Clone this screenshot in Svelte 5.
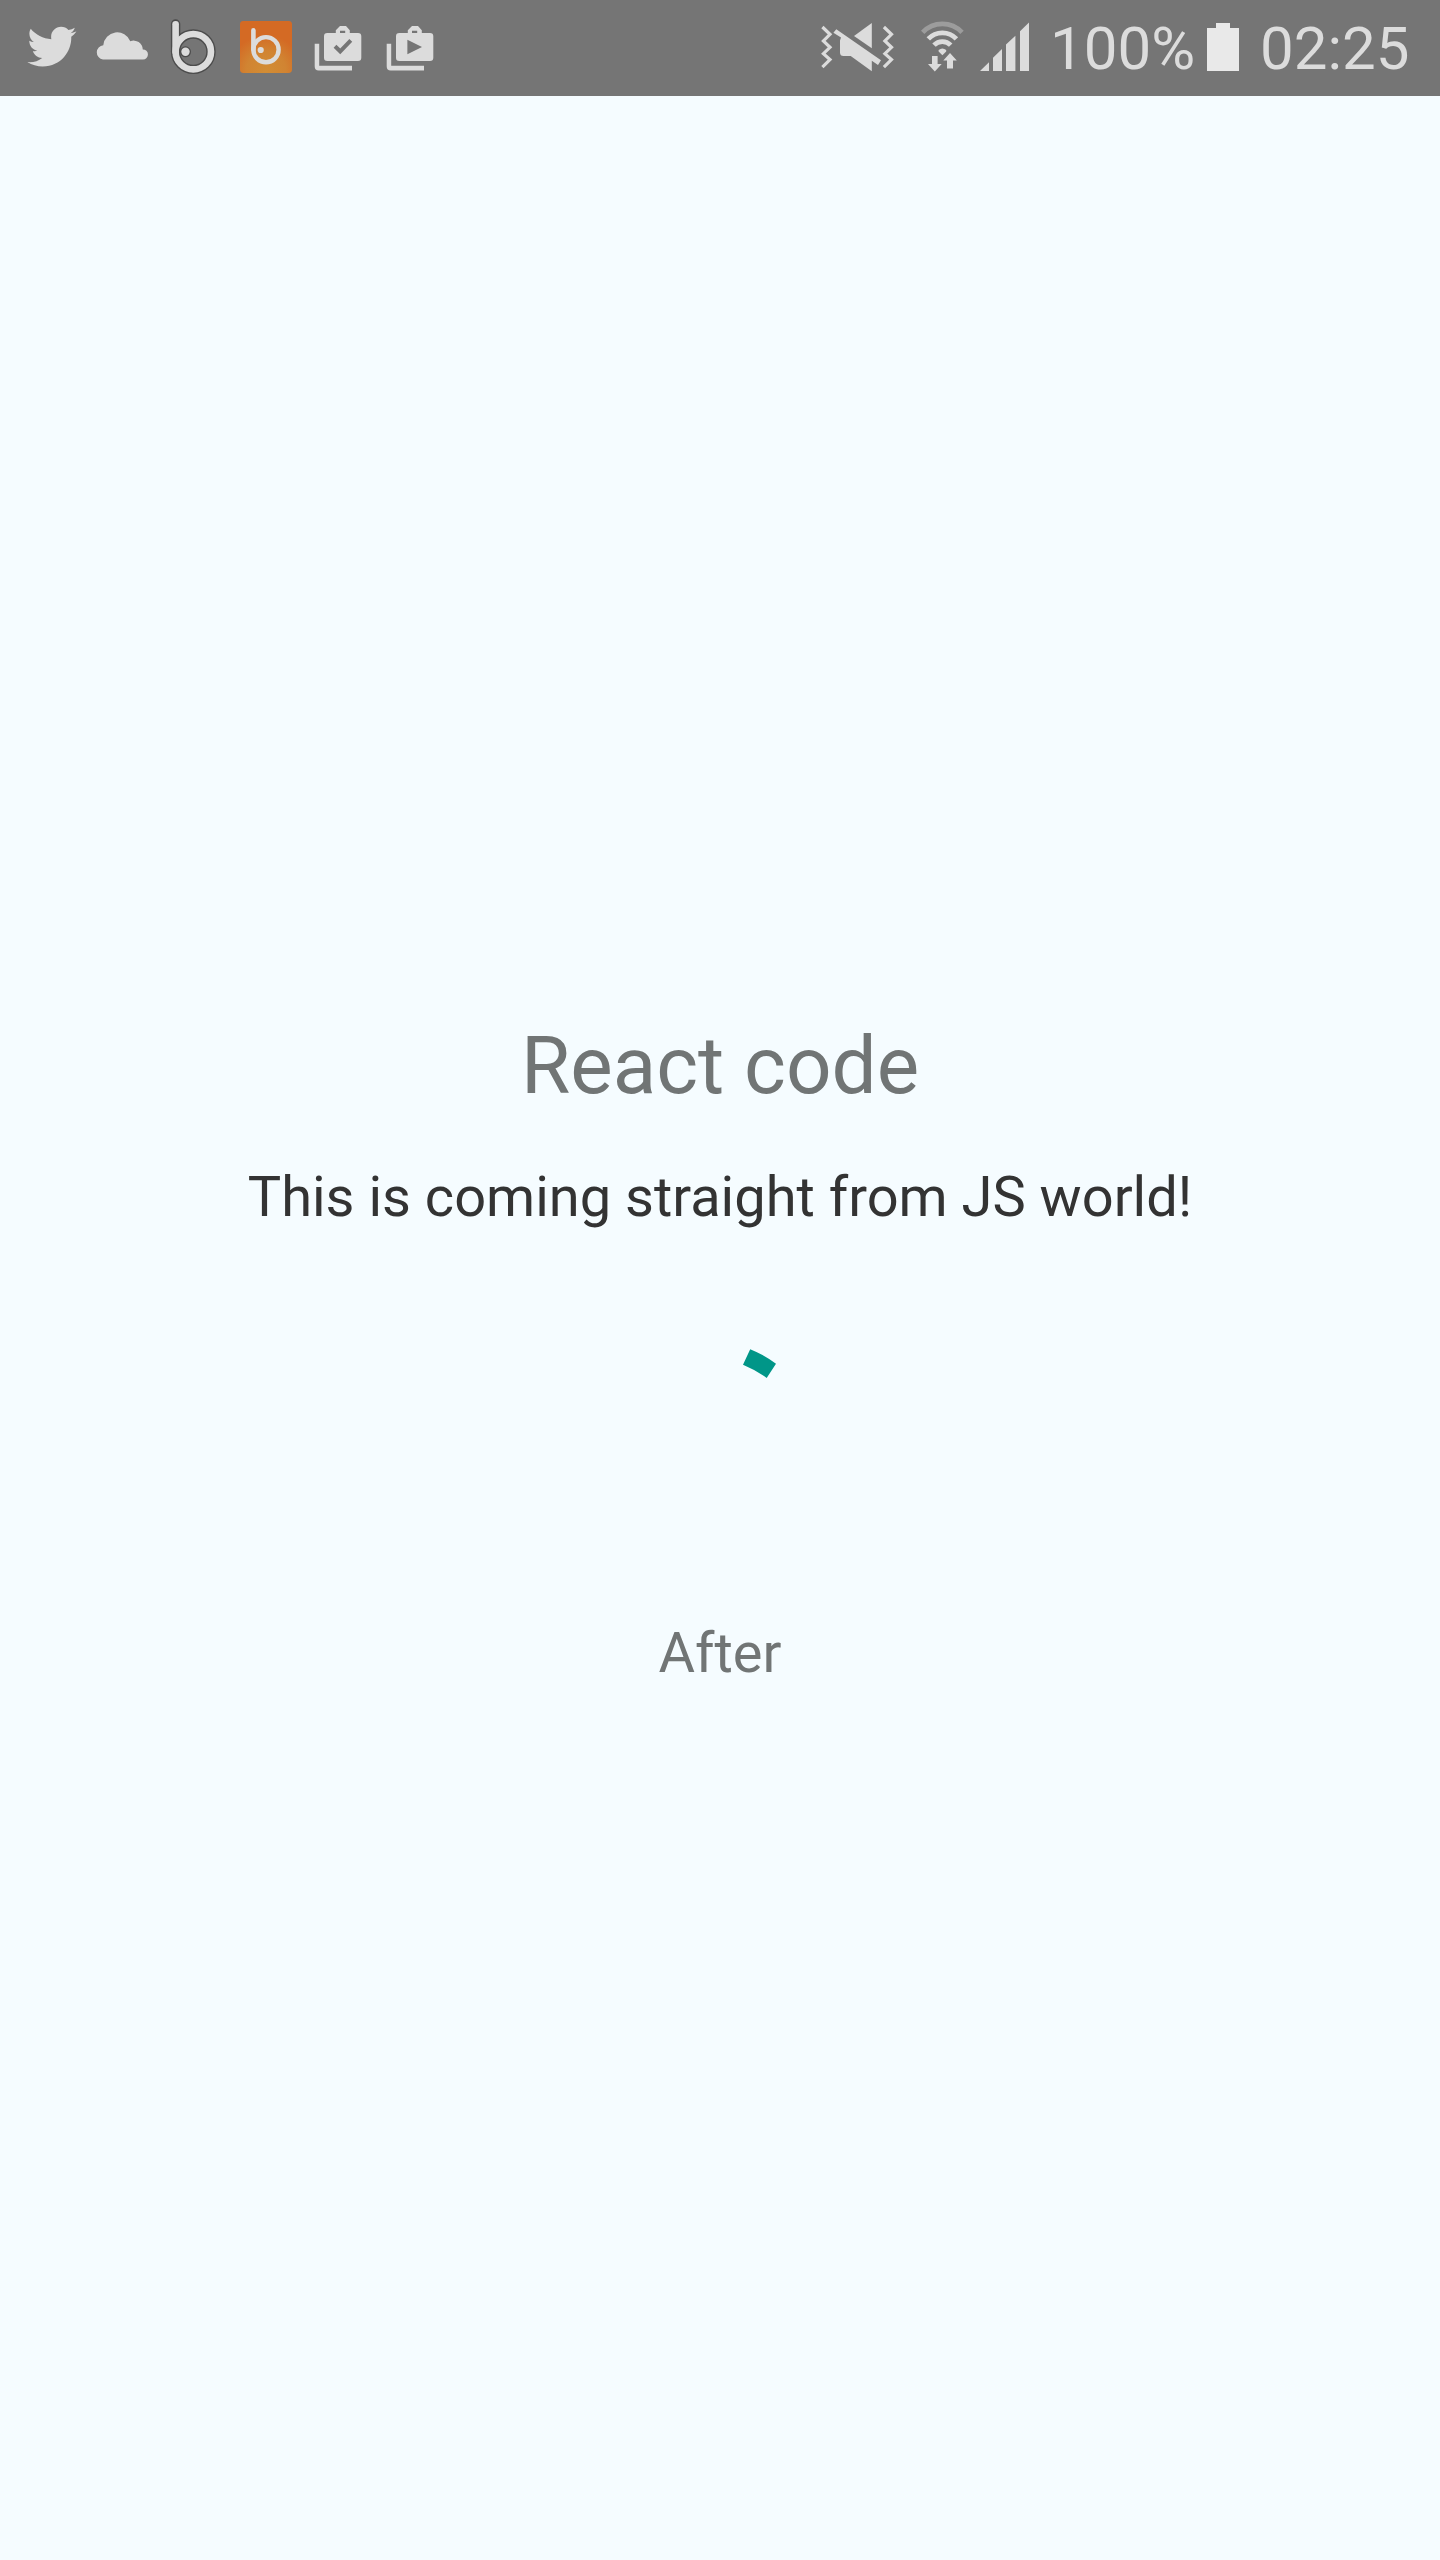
<script>
  const bags = [
    { kind: 'check', x: 0 },
    { kind: 'play', x: 72 }
  ];
</script>

<div class="screen">
  <header class="status">
    <div class="group">
      <svg class="icon" width="86" height="96" viewBox="0 0 86 96">
        <path transform="translate(27.4 22.3) scale(2.035)" d="M23.954 4.569c-.885.389-1.83.654-2.825.775 1.014-.611 1.794-1.574 2.163-2.723-.951.555-2.005.959-3.127 1.184-.896-.959-2.173-1.559-3.591-1.559-2.717 0-4.92 2.203-4.92 4.917 0 .39.045.765.127 1.124C7.691 8.094 4.066 6.13 1.64 3.161c-.427.722-.666 1.561-.666 2.475 0 1.71.87 3.213 2.188 4.096-.807-.026-1.566-.248-2.228-.616v.061c0 2.385 1.693 4.374 3.946 4.827-.413.111-.849.171-1.296.171-.314 0-.615-.03-.916-.086.631 1.953 2.445 3.377 4.604 3.417-1.68 1.319-3.809 2.105-6.102 2.105-.39 0-.779-.023-1.17-.067 2.189 1.394 4.768 2.209 7.557 2.209 9.054 0 13.999-7.496 13.999-13.986 0-.209 0-.42-.015-.63.961-.689 1.8-1.56 2.46-2.548z" />
      </svg>
      <svg class="icon" width="74" height="96" viewBox="86 0 74 96">
        <path d="M103 59.5a7.2 7.2 0 0 1 0.3-14.3A14 14 0 0 1 130.3 41.3A9 9 0 0 1 142.8 49.4A5 5 0 0 1 143 59.5z" />
      </svg>
      <svg class="icon" width="70" height="96" viewBox="160 0 70 96">
        <g class="shade">
          <path d="M175.6 24V51.7" stroke-width="9.4" />
          <circle cx="193.3" cy="51.7" r="17.7" stroke-width="9.4" />
          <circle cx="185.5" cy="51.8" r="3" stroke-width="5" />
        </g>
        <g class="line">
          <path d="M175.6 24.3V51.7" stroke-width="6.6" />
          <circle cx="193.3" cy="51.7" r="17.7" stroke-width="6.6" />
        </g>
        <circle cx="185.5" cy="51.8" r="4.2" />
      </svg>
      <svg class="icon" width="74" height="96" viewBox="230 0 74 96">
        <defs>
          <radialGradient id="glow" gradientUnits="userSpaceOnUse" cx="266" cy="71" r="36">
            <stop offset="0" stop-color="#d28d35" />
            <stop offset="0.55" stop-color="#d18432" />
            <stop offset="1" stop-color="#d46a24" />
          </radialGradient>
        </defs>
        <rect x="240" y="21" width="52" height="52" rx="3.4" fill="url(#glow)" />
        <g class="line">
          <path d="M253.4 30.4V49.7" stroke-width="4.6" />
          <circle cx="266" cy="49.7" r="12.6" stroke-width="4.4" />
        </g>
        <circle cx="260.7" cy="50" r="3.1" />
      </svg>
      {#each bags as bag}
        <svg class="icon" width="72" height="96" viewBox="304 0 72 96">
          <path fill-rule="evenodd" d="M327.3 33H335.8V30.3L340 26H346L349.8 30.3V33H358A3.3 3.3 0 0 1 361.3 36.3V57.7A3.3 3.3 0 0 1 358 61H327.3A3.3 3.3 0 0 1 324 57.7V36.3A3.3 3.3 0 0 1 327.3 33zM340 30.8V33H345.2V30.8z" />
          <path d="M314.7 43.8H319.2V65.7H352V70.4H318.7A4 4 0 0 1 314.7 66.4z" />
          {#if bag.kind === 'check'}
            <path class="cut" d="M335 46.3L340.2 51.3L350.8 40.3" />
          {:else}
            <path class="hole" d="M335.4 39.7V54.2L350 47z" />
          {/if}
        </svg>
      {/each}
    </div>

    <div class="group">
      <svg class="icon" width="100" height="96" viewBox="810 0 100 96">
        <path class="zig" d="M822.4 27L830 34.3L823.4 41L830 47.3L823.4 53.6L830 59.6L822.4 67.2" />
        <path class="zig" d="M883.9 27L891.5 34.3L884.9 41L891.5 47.3L884.9 53.6L891.5 59.6L883.9 67.2" />
        <path d="M854 36L871.8 23V48.3z" />
        <path d="M836.3 29.2L881 60.3L878 65L871.8 60.8V71.2L850.7 56H843.5Q840 56 840 52.5V40.5L841 37.6L833.4 32.8z" />
      </svg>
      <svg class="icon" width="62" height="96" viewBox="910 0 62 96">
        <path class="arc dim" d="M922.7 32.3A27 27 0 0 1 962 32.3" />
        <path class="arc" d="M928.3 38.9A19.3 19.3 0 0 1 956.4 38.9" />
        <path class="arc" d="M934 45.2A11.6 11.6 0 0 1 950.7 45.2" />
        <path d="M938.6 50Q942.4 46.8 946.2 50V51.5L942.4 55.3L938.6 51.5z" />
        <path d="M932 56H937.6V64H941.7L934.8 71.6L928 64H932z" />
        <path d="M947 68.4H953V60.5H956.8L950 53L943.3 60.5H947z" />
      </svg>
      <svg class="icon" width="78" height="96" viewBox="972 0 78 96">
        <path d="M980 71L989 62.3V71zM993 71V57.7L1002 49V71zM1006 71V44.6L1015.4 35.8V71zM1020 71V31.3L1029 22.5V71z" />
      </svg>
      <span class="percent">100%</span>
      <svg class="icon battery" width="54" height="96" viewBox="1196 0 54 96">
        <path d="M1207 28H1216V23H1230V28H1239V71H1207z" />
      </svg>
      <span class="clock">02:25</span>
    </div>
  </header>

  <main>
    <h1>React code</h1>
    <p class="message">This is coming straight from JS world!</p>
    <svg class="spinner" width="144" height="144" viewBox="648 1329 144 144">
      <path d="M750.2 1349.2Q764.5 1355 776 1363.8L766.7 1378Q755.5 1370 743 1364.8z" />
    </svg>
    <p class="after">After</p>
  </main>
</div>

<style>
  :global(body) {
    margin: 0;
    background: #f5fcff;
  }
  .screen {
    width: 1440px;
    height: 2560px;
    background: #f5fcff;
    font-family: Roboto, sans-serif;
    display: flex;
    flex-direction: column;
    overflow: hidden;
  }
  .status {
    height: 96px;
    flex: none;
    display: flex;
    justify-content: space-between;
    background: #757575;
    color: #dcdcdc;
  }
  .group {
    display: flex;
  }
  .icon {
    display: block;
    flex: none;
    fill: #dcdcdc;
  }
  .battery {
    fill: #e9e9e9;
  }
  .line {
    fill: none;
    stroke: #dcdcdc;
    stroke-linecap: round;
  }
  .shade {
    fill: none;
    stroke: #4c4c4c;
    stroke-linecap: round;
  }
  .cut {
    fill: none;
    stroke: #757575;
    stroke-width: 4;
  }
  .hole {
    fill: #757575;
  }
  .zig {
    fill: none;
    stroke: #dcdcdc;
    stroke-width: 3.2;
  }
  .arc {
    fill: none;
    stroke: #dcdcdc;
    stroke-width: 4.8;
  }
  .dim {
    stroke: #9c9c9c;
  }
  .percent,
  .clock {
    box-sizing: border-box;
    font-size: 60px;
    line-height: 72px;
    padding-top: 13px;
    white-space: nowrap;
  }
  .percent {
    width: 146px;
  }
  .clock {
    width: 190px;
    padding-left: 10px;
  }
  main {
    display: flex;
    flex-direction: column;
    align-items: center;
    padding-top: 923px;
  }
  h1,
  p {
    margin: 0;
    font-weight: 400;
    color: #717575;
  }
  h1 {
    font-size: 80px;
    line-height: 94px;
  }
  .message {
    margin-top: 51px;
    font-size: 56px;
    line-height: 66px;
    color: #333333;
  }
  .spinner {
    margin-top: 99px;
    fill: #009688;
  }
  .after {
    margin-top: 147px;
    font-size: 56px;
    line-height: 66px;
  }
</style>
